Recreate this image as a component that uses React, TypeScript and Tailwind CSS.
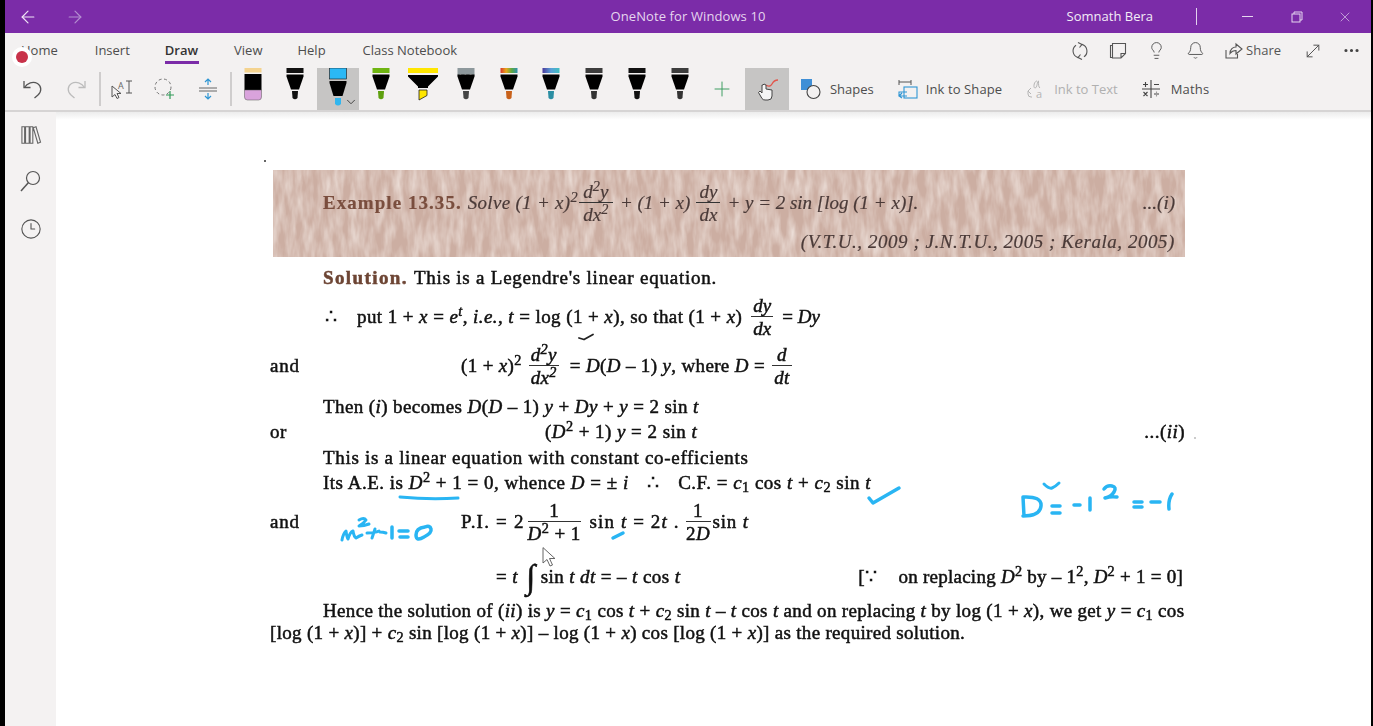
import { Bell, Clock3, Ellipsis, Lightbulb, MoveDiagonal, Plus, ChevronDown, ArrowLeft, ArrowRight, X } from "lucide-react";
import React from "react";

type PenProps = {
  id: string;
  cap: string[];
  tip: string;
  tall?: boolean;
  wide?: boolean;
  zigzag?: boolean;
};

const Pen: React.FC<PenProps> = ({ id, cap, tip, tall, wide, zigzag }) => {
  const capFill = cap.length > 1 ? `url(#${id})` : cap[0];
  return (
    <svg width="32" height="40" viewBox="0 0 32 40" className="self-start">
      {cap.length > 1 && (
        <defs>
          <linearGradient id={id}>
            {cap.map((c, i) => (
              <stop key={c} offset={i / (cap.length - 1)} stopColor={c} />
            ))}
          </linearGradient>
        </defs>
      )}
      {wide ? (
        <>
          <rect x="1" y="0" width="30" height="5" fill={capFill} />
          <path d="M1 7h30v1.500l-10 10v1.500H11v-1.500L1 8.500z" fill="#000" />
          <path d="M12 22h8v5.500l-8 4.500z" fill={tip} stroke="#222" strokeWidth="0.8" />
        </>
      ) : tall ? (
        <>
          <rect x="7.500" y="0" width="17" height="11" fill={capFill} stroke="#111" strokeWidth="0.6" />
          <path d="M7.500 13h17v2l-4 13h-9l-4-13z" fill="#000" />
          <path d="M13 30h6v6q-3 3-6 0z" fill={tip} />
        </>
      ) : (
        <>
          <rect x="7.500" y="0" width="17" height="5" fill={capFill} />
          {zigzag && <path d="M7.500 5v3l3-2 2 2 3-2 2 2 3-2 4 2V5z" fill={capFill} />}
          <path d="M7.500 6.500h17v2l-4.500 13h-8l-4.500-13z" fill="#000" />
          <path d="M13 23h6l-.5 7q-2.500 2.500-5 0z" fill={tip} />
        </>
      )}
    </svg>
  );
};

const Cell: React.FC<{ w: string; active?: boolean; children: React.ReactNode }> = ({ w, active, children }) => (
  <div className={`relative flex h-full items-center justify-center ${w} ${active ? "bg-[#c6c5c4]" : ""}`}>{children}</div>
);

const Frac: React.FC<{ top: React.ReactNode; bottom: React.ReactNode; className?: string }> = ({ top, bottom, className }) => (
  <span className={`inline-flex flex-col items-center leading-[19px] ${className ?? ""}`}>
    <span className="border-b border-[#333] px-[1px] pb-[1px] w-full text-center">{top}</span>
    <span className="pt-[2px] w-full text-center">{bottom}</span>
  </span>
);

const Row: React.FC<{ className: string; children: React.ReactNode }> = ({ className, children }) => (
  <div className={`flex items-center whitespace-nowrap ${className}`}>{children}</div>
);

const UndoIcon: React.FC<{ className: string }> = ({ className }) => (
  <svg width="24" height="24" viewBox="0 0 24 24" fill="none" stroke="currentColor" strokeWidth="1.300" className={className}>
    <path d="M3 4v6.500h6.500" />
    <path d="M3.500 10.500C6 6 12 4 16.500 6.500c4 2.500 4.500 8 .5 11.500l-3.500 3" />
  </svg>
);

export default function App() {
  return (
    <div className="relative flex h-[726px] w-[1373px] overflow-hidden bg-black font-['Open_Sans',sans-serif]">
      <div className="w-[5px] shrink-0 bg-black" />
      <div className="flex w-[1366px] flex-col bg-white">
        {/* title bar */}
        <div className="grid h-[33px] shrink-0 grid-cols-3 items-center bg-[#7b2ca8] text-[13px] text-[#e6d6ef]">
          <div className="flex items-center gap-[27px] pl-[13px]">
            <ArrowLeft size={20} strokeWidth={1.4} className="text-[#f0e6f5]" />
            <ArrowRight size={20} strokeWidth={1.4} className="text-[#b48fd0]" />
          </div>
          <div className="text-center tracking-[0.1px]">OneNote for Windows 10</div>
          <div className="flex items-center justify-end text-[#f3ecf7]">
            <span>Somnath Bera</span>
            <span className="ml-[43px] h-[17px] w-[1px] bg-[#e3d2ee]" />
            <span className="ml-[45px] h-[1px] w-[11px] bg-[#e6d6ef]" />
            <svg width="12" height="12" viewBox="0 0 12 12" className="ml-[38px]" fill="none" stroke="#e6d6ef" strokeWidth="1">
              <rect x="1" y="3" width="8" height="8" />
              <path d="M3 3V1h8v8H9" />
            </svg>
            <X size={16} strokeWidth={1.1} className="ml-[34px] mr-[18px] text-[#d9c3e6]" />
          </div>
        </div>

        {/* ribbon */}
        <div className="h-[79px] shrink-0 border-b-2 border-[#d6d4d4] bg-[#f3f1f1]">
          <div className="flex h-[35px] items-center text-[13px] text-[#4d4d4d]">
            <div className="flex gap-[36px] pl-[16px]">
              <span>Home</span>
              <span className="ml-[1px]">Insert</span>
              <span className="relative -ml-[1px] font-semibold text-[#333]">
                Draw
                <span className="absolute -bottom-[4px] left-0 h-[3px] w-[34px] bg-[#7b2ca8]" />
              </span>
              <span>View</span>
              <span className="-ml-[1px]">Help</span>
              <span className="ml-[1px]">Class Notebook</span>
            </div>
            <div className="ml-auto flex items-center text-[#555]">
              <svg width="20" height="20" viewBox="0 0 20 20" fill="none" stroke="#555" strokeWidth="1.100">
                <path d="M6 4.200A7 7 0 0 0 8 16.600M14 15.800A7 7 0 0 0 12 3.400" />
                <path d="M8 1.500 12 3.400 9.500 6.500M12 18.500l-4-1.900 2.500-3.100" />
              </svg>
              <svg width="18" height="18" viewBox="0 0 18 18" className="ml-[19px]" fill="none" stroke="#555" strokeWidth="1.100">
                <path d="M3.500 1.500h13v10l-4.500 4.500H3.500zM12 16v-4.500h4.500" />
                <path d="M3.500 3.500h-2v12h2" />
              </svg>
              <Lightbulb size={19} strokeWidth={1.2} className="ml-[20px]" />
              <Bell size={19} strokeWidth={1.2} className="ml-[20px]" />
              <svg width="18" height="18" viewBox="0 0 18 18" className="ml-[20px]" fill="none" stroke="#555" strokeWidth="1.100">
                <path d="M1 8v8h11.500v-4M5 11.500C5 7 8 5 11 5V2l6 5-6 5V8.500c-2.500 0-4.500 1-6 3z" />
              </svg>
              <span className="ml-[3px]">Share</span>
              <MoveDiagonal size={20} strokeWidth={1.2} className="ml-[22px]" />
              <Ellipsis size={19} strokeWidth={2} className="ml-[19px] mr-[10px] text-[#444]" />
            </div>
          </div>

          <div className="flex h-[42px] items-center pl-[6.5px] text-[13px] text-[#4d4d4d]">
            <Cell w="w-[43px]"><UndoIcon className="text-[#555]" /></Cell>
            <Cell w="w-[43px]"><UndoIcon className="-scale-x-100 text-[#bcbcbc]" /></Cell>
            <div className="ml-[1.500px] h-[34px] w-[2px] bg-[#cfcdcd]" />
            <Cell w="w-[41px]">
              <svg width="22" height="20" viewBox="0 0 22 20" fill="none" stroke="#555" strokeWidth="1">
                <path d="M1 7v11l3-2.500 2 4 2-1-2-4h4z" fill="#f3f1f1" />
                <path d="M15 2h6M15 14h6M18 2v12" />
                <text x="7" y="10" fontSize="9" fill="#666" stroke="none">A</text>
              </svg>
            </Cell>
            <Cell w="w-[45px]">
              <svg width="22" height="22" viewBox="0 0 22 22" fill="none">
                <circle cx="9" cy="9" r="8" stroke="#777" strokeWidth="1" strokeDasharray="3 2.500" />
                <path d="M16 13v8M12 17h8" stroke="#2f9a57" strokeWidth="1.200" />
              </svg>
            </Cell>
            <Cell w="w-[41px]">
              <svg width="20" height="22" viewBox="0 0 20 22" fill="none">
                <path d="M1 10h18M1 13h18" stroke="#666" strokeWidth="1" />
                <path d="M10 1v6M7 4l3-3 3 3M10 15v6M7 18l3 3 3-3" stroke="#2e95d3" strokeWidth="1.200" />
              </svg>
            </Cell>
            <div className="ml-[2px] h-[34px] w-[2px] bg-[#cfcdcd]" />
            <Cell w="w-[42px]">
              <svg width="20" height="34" viewBox="0 0 20 34" className="self-start">
                <rect x="1.500" y="0" width="17" height="4.500" fill="#f4d38f" />
                <rect x="1.500" y="6" width="17" height="16" fill="#000" />
                <path d="M1.500 22h17v7q0 3-3 3h-11q-3 0-3-3z" fill="#d9a3dc" stroke="#555" strokeWidth="0.5" />
              </svg>
            </Cell>
            <Cell w="w-[42.700px]"><Pen id="p1" cap={["#111"]} tip="#111" /></Cell>
            <Cell w="w-[42.700px]" active>
              <Pen id="p2" cap={["#2bb8f5"]} tip="#31b6ef" tall />
              <ChevronDown size={14} strokeWidth={1.5} className="absolute bottom-[1px] right-[1px] text-[#333]" />
            </Cell>
            <Cell w="w-[42.700px]"><Pen id="p3" cap={["#6fb512"]} tip="#5ea00f" /></Cell>
            <Cell w="w-[42.700px]"><Pen id="p4" cap={["#ffe600"]} tip="#ffe600" wide /></Cell>
            <Cell w="w-[42.700px]"><Pen id="p5" cap={["#8d989c"]} tip="#444" zigzag /></Cell>
            <Cell w="w-[42.700px]"><Pen id="p6" cap={["#d8352a", "#e8a81c", "#5aa845", "#2f8fb0"]} tip="#c8611a" /></Cell>
            <Cell w="w-[42.700px]"><Pen id="p7" cap={["#4b3a9c", "#5aa0d8", "#3fc0c0"]} tip="#2b8ea3" /></Cell>
            <Cell w="w-[42.700px]"><Pen id="p8" cap={["#3d3d3d"]} tip="#333" /></Cell>
            <Cell w="w-[42.700px]"><Pen id="p9" cap={["#111"]} tip="#111" /></Cell>
            <Cell w="w-[42.700px]"><Pen id="p10" cap={["#3d3d3d"]} tip="#333" /></Cell>
            <Cell w="w-[42.700px]"><Plus size={24} strokeWidth={1} className="text-[#3f9e63]" /></Cell>
            <div className="ml-[1.400px] h-full">
              <Cell w="w-[44px]" active>
                <svg width="24" height="26" viewBox="0 0 24 26" fill="none">
                  <path d="M11 9c3 2 5 1 6-1s3-4 6-4" stroke="#e2574c" strokeWidth="1.300" />
                  <path d="M7 9v8l-2-2-1.500 1.500 3.500 6q1 1.500 3 1.500h3q4 0 4-4v-6l-6-1V9q-2.500-2-3 0z" fill="#f5f5f5" stroke="#444" strokeWidth="1" />
                </svg>
              </Cell>
            </div>
            <svg width="21" height="21" viewBox="0 0 21 21" className="ml-[11px]" fill="none">
              <rect x="1" y="0" width="11" height="11" fill="#3f8fd6" />
              <circle cx="13.500" cy="13" r="6.500" fill="#f3f1f1" stroke="#444" strokeWidth="1.100" />
            </svg>
            <span className="ml-[9px] mt-[1px]">Shapes</span>
            <svg width="21" height="21" viewBox="0 0 21 21" className="ml-[23px]" fill="none">
              <path d="M2 1v5M14 1v5M2 3h12" stroke="#555" strokeWidth="1" />
              <rect x="7" y="8" width="13" height="11" stroke="#2e95d3" strokeWidth="1.100" />
              <path d="M10 13H2v4h8M5 14l-3 3 3 2" stroke="#2e95d3" strokeWidth="1.100" />
            </svg>
            <span className="ml-[8px] mt-[1px] tracking-[0.1px]">Ink to Shape</span>
            <svg width="21" height="21" viewBox="0 0 21 21" className="ml-[23px]" fill="none" stroke="#b5b5b5" strokeWidth="1">
              <path d="M12 2c-3 0-4 7-2 7 2.500 0 2-7 3.500-7 0 4 0 6 1.500 7M6 9l-3 3 3 3M3 12v3q0 3 3 3h1" />
              <text x="11" y="19" fontSize="11" fill="#b5b5b5" stroke="none">a</text>
            </svg>
            <span className="ml-[8px] mt-[1px] text-[#b0b0b0]">Ink to Text</span>
            <svg width="20" height="20" viewBox="0 0 20 20" className="ml-[23px]" fill="none" stroke="#444" strokeWidth="1.100">
              <path d="M10 1v18M1 10h18M2 5.500h5M4.500 3v5M13 5.500h5M2.500 13l4 4M6.500 13l-4 4M13 15h5M15.500 12.800v.6M15.500 16.600v.6" />
            </svg>
            <span className="ml-[10px] mt-[1px] tracking-[0.2px]">Maths</span>
          </div>
        </div>

        {/* body */}
        <div className="flex min-h-0 flex-1">
          <div className="flex w-[51px] shrink-0 flex-col items-center gap-[25px] bg-[#f4f2f2] pt-[13px] text-[#555]">
            <svg width="22" height="20" viewBox="0 0 23 22" fill="none" stroke="#666" strokeWidth="1.200">
              <path d="M1.500 2h3v18h-3zM5.500 2h4v18h-4zM10.500 2h3v18h-3zM14 3l3-1 5 17-3 1z" />
            </svg>
            <svg width="23" height="23" viewBox="0 0 23 23" fill="none" stroke="#555" strokeWidth="1.200">
              <circle cx="14" cy="8" r="6.500" />
              <path d="M9.500 12.500 2 21" strokeWidth="1.500" />
            </svg>
            <Clock3 size={22} strokeWidth={1.2} />
          </div>

          <div className="relative flex-1 bg-white">
            <div className="h-[8px] bg-gradient-to-b from-[#ececec] to-white" />
            <div className="ml-[213px] mt-[50px] w-[916px] pl-[1px] text-[19px] text-[#111] font-['Liberation_Serif',serif] [-webkit-text-stroke:0.5px] blur-[0.35px]">
              {/* example banner */}
              <div className="relative ml-[3px] h-[87px] w-[912px] overflow-hidden bg-[#ccaea2] [-webkit-text-stroke:0.2px]">
                <svg className="absolute inset-0 h-full w-full" preserveAspectRatio="none">
                  <filter id="grain">
                    <feTurbulence type="fractalNoise" baseFrequency="0.13 0.035" numOctaves="3" seed="7" />
                    <feColorMatrix type="matrix" values="0 0 0 0 0.90 0 0 0 0 0.82 0 0 0 0 0.78 1.300 0 0 0 -0.420" />
                  </filter>
                  <rect width="100%" height="100%" filter="url(#grain)" />
                </svg>
                <div className="relative flex h-full flex-col text-[#4a3a38]">
                  <Row className="mt-[11px] h-[44px] pl-[50px] italic">
                    <span className="font-bold not-italic text-[#7a4e3e] tracking-[1.05px]">Example 13.35.</span>
                    <span className="ml-[6px] tracking-[0.3px]">Solve (1 + x)<sup>2</sup></span>
                    <Frac className="ml-[1px] w-[34px]" top={<>d<sup>2</sup>y</>} bottom={<>dx<sup>2</sup></>} />
                    <span className="ml-[7px]">+ (1 + x)</span>
                    <Frac className="ml-[6px] w-[24px]" top="dy" bottom="dx" />
                    <span className="ml-[7px]">+ y = 2 sin [log (1 + x)].</span>
                    <span className="ml-auto mr-[10px]">...(i)</span>
                  </Row>
                  <Row className="mt-[6px] h-[22px] justify-end pr-[10px] italic tracking-[0.55px]">
                    <span>(V.T.U., 2009 ; J.N.T.U., 2005 ; Kerala, 2005)</span>
                  </Row>
                </div>
              </div>

              <Row className="mt-[10px] h-[22px] pl-[53px]">
                <span className="font-bold text-[#6d4534] tracking-[1.4px]">Solution.</span>
                <span className="ml-[6px] tracking-[0.77px]">This is a Legendre's linear equation.</span>
              </Row>

              <Row className="mt-[8px] h-[40px] pl-[55px]">
                <span>∴</span>
                <span className="ml-[20px] tracking-[0.42px]">put 1 + <i>x</i> = <i>e<sup>t</sup></i>, <i>i.e.</i>, <i>t</i> = log (1 + <i>x</i>), so that (1 + <i>x</i>)</span>
                <Frac className="ml-[9px] w-[22px] italic" top="dy" bottom="dx" />
                <span className="ml-[9px]">= <i>Dy</i></span>
              </Row>

              <Row className="mt-[7px] h-[44px] tracking-[0.35px]">
                <span className="w-[191px] tracking-[0.8px]">and</span>
                <span>(1 + <i>x</i>)<sup>2</sup></span>
                <Frac className="ml-[7px] w-[30px] italic" top={<>d<sup>2</sup>y</>} bottom={<>dx<sup>2</sup></>} />
                <span className="ml-[11px]">= <i>D</i>(<i>D</i> – 1) <i>y</i>, where <i>D</i> =</span>
                <Frac className="ml-[7px] w-[20px] italic" top="d" bottom="dt" />
              </Row>

              <Row className="mt-[8px] h-[22px] pl-[53px] tracking-[0.4px]">
                <span>Then (<i>i</i>) becomes <i>D</i>(<i>D</i> – 1) <i>y</i> + <i>Dy</i> + <i>y</i> = 2 sin <i>t</i></span>
              </Row>

              <Row className="mt-[3px] h-[22px] tracking-[0.45px]">
                <span className="w-[275px]">or</span>
                <span>(<i>D</i><sup>2</sup> + 1) <i>y</i> = 2 sin <i>t</i></span>
                <span className="ml-auto">...(<i>ii</i>)</span>
              </Row>

              <Row className="mt-[4px] h-[22px] pl-[53px] tracking-[0.7px]">
                <span>This is a linear equation with constant co-efficients</span>
              </Row>

              <Row className="mt-[3px] h-[22px] pl-[53px] tracking-[0.5px]">
                <span>Its A.E. is <i>D</i><sup>2</sup> + 1 = 0, whence <i>D</i> = ± <i>i</i></span>
                <span className="ml-[18px]">∴</span>
                <span className="ml-[19px]">C.F. = <i>c</i><sub>1</sub> cos <i>t</i> + <i>c</i><sub>2</sub> sin <i>t</i></span>
              </Row>

              <Row className="mt-[8px] h-[40px] tracking-[0.4px]">
                <span className="w-[191px] tracking-[0.8px]">and</span>
                <span className="tracking-[1.2px]">P.I. = 2</span>
                <Frac className="ml-[3px] w-[53px]" top="1" bottom={<><i>D</i><sup>2</sup> + 1</>} />
                <span className="ml-[9px] tracking-[1.1px]">sin <i>t</i> = 2<i>t</i> .</span>
                <Frac className="ml-[6px] w-[25px]" top="1" bottom={<>2<i>D</i></>} />
                <span className="ml-[2px] tracking-[0.8px]">sin <i>t</i></span>
              </Row>

              <Row className="mt-[15px] h-[40px] tracking-[0.4px]">
                <span className="ml-[226px]">= <i>t</i></span>
                <span className="ml-[8px] text-[34px] font-normal leading-none">∫</span>
                <span className="ml-[5px]">sin <i>t</i> <i>dt</i> = – <i>t</i> cos <i>t</i></span>
                <span className="ml-auto">[∵</span>
                <span className="ml-[21px] mr-[2px] tracking-[0.25px]">on replacing <i>D</i><sup>2</sup> by – 1<sup>2</sup>, <i>D</i><sup>2</sup> + 1 = 0]</span>
              </Row>

              <Row className="mt-[3px] h-[22px] pl-[53px] tracking-[0.33px]">
                <span>Hence the solution of (<i>ii</i>) is <i>y</i> = <i>c</i><sub>1</sub> cos <i>t</i> + <i>c</i><sub>2</sub> sin <i>t</i> – <i>t</i> cos <i>t</i> and on replacing <i>t</i> by log (1 + <i>x</i>), we get <i>y</i> = <i>c</i><sub>1</sub> cos</span>
              </Row>
              <Row className="h-[22px] tracking-[0.31px]">
                <span>[log (1 + <i>x</i>)] + <i>c</i><sub>2</sub> sin [log (1 + <i>x</i>)] – log (1 + <i>x</i>) cos [log (1 + <i>x</i>)] as the required solution.</span>
              </Row>
            </div>
          </div>
        </div>
      </div>
      <div className="w-[2px] shrink-0 bg-black" />

      {/* recording dot */}
      <div className="absolute left-[12px] top-[47px] flex h-[20px] w-[20px] items-center justify-center rounded-full bg-white">
        <div className="h-[12px] w-[12px] rounded-full bg-[#c8324a]" />
      </div>

      {/* pen strokes and pointer drawn over the page */}
      <svg className="pointer-events-none absolute inset-0" width="1373" height="726" viewBox="0 0 1373 726" fill="none" strokeLinecap="round" strokeLinejoin="round">
        <circle cx="265" cy="161" r="1" fill="#333" />
        <circle cx="1195" cy="438" r="0.8" fill="#888" />
        <path d="M579 338l5 1.500 9-5" stroke="#222" strokeWidth="1.800" />
        <g stroke="#29b5f3" strokeWidth="3.500">
          <path d="M400 497q30 3 58 1" strokeWidth="3" />
          <path d="M869 498l4 5 26-15" />
          <path d="M613 538l10-5" />
          <path d="M342 540q1-6 4-9 1 7 2 8 2-7 5-8 1 6 3 7 3-2 6-3M359 520q5-3 7 0-2 3-7 6 5 0 10-2M367 533q8 0 12-2M372 538l3-9 M380 532q3 0 6 1" strokeWidth="3" />
          <path d="M392 527v11M399 531h9M400 537h8" />
          <path d="M425 527q-9 1-9 8t8 2q8-4 7-8t-6-2z" />
          <path d="M1023 497l1 19M1023 497q19-1 18 9t-18 10" />
          <path d="M1044 484q5 5 8 4t7-5" strokeWidth="3" />
          <path d="M1052 506h8M1052 513h8" />
          <path d="M1074 505h6M1090 498v12" />
          <path d="M1104 489q3-4 8-3t2 6-9 6q6-2 12-1" />
          <path d="M1134 502h8M1134 507h8M1151 502h9" />
          <path d="M1172 494q-4 6-3 15" />
        </g>
        <path d="M543 548v15l4-3.500 3 6.500 2.500-1-3-6.500h5z" fill="#fff" stroke="#555" strokeWidth="0.900" />
      </svg>
    </div>
  );
}
